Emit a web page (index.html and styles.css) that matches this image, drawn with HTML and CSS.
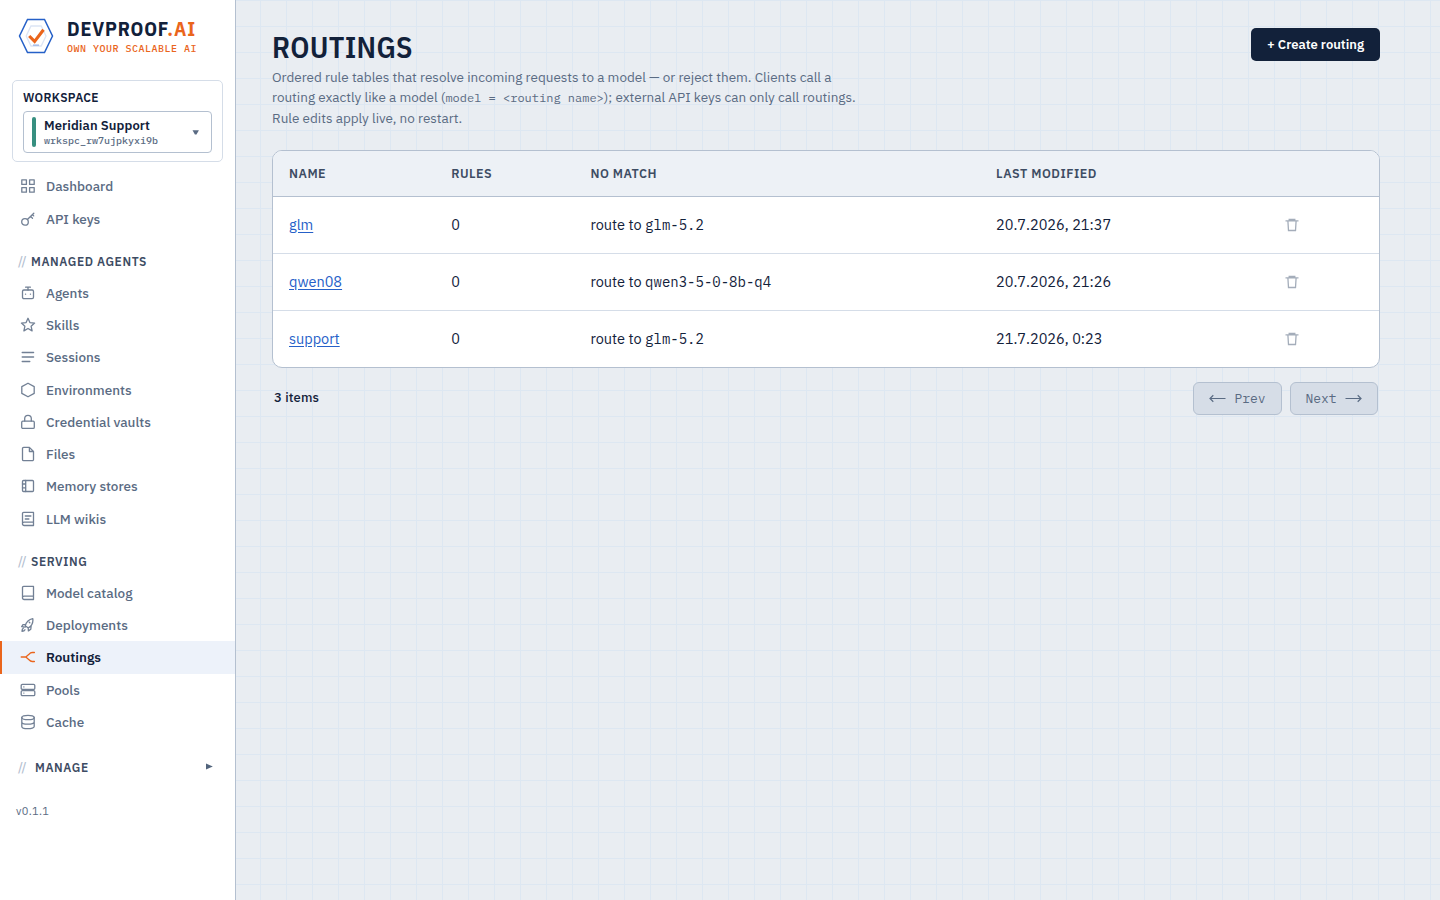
FILE: index.html
```html
<!DOCTYPE html>
<html lang="en">
<head>
<meta charset="utf-8">
<title>Routings</title>
<link rel="stylesheet" href="styles.css">
</head>
<body>
<div class="app">
  <aside class="sidebar">
    <div class="brand">
      <svg class="brand-mark" width="36" height="36" viewBox="0 0 36 36" fill="none">
        <path d="M9.500 1.500H26.500L34.500 18L26.500 34.500H9.500L1.500 18Z" stroke="#2560c8" stroke-width="1.5"/>
        <path d="M13 8H23.200L28 18L23.200 28H13L8.200 18Z" stroke="#dce5f5" stroke-width="1.3"/>
        <path d="M15 27.200H21" stroke="#a9c0ea" stroke-width="1.6"/>
        <path d="M11.200 18L16.600 23.400L25.500 11.800" stroke="#ea651c" stroke-width="3.100"/>
      </svg>
      <div class="brand-text">
        <div class="brand-name">DEVPROOF<span class="brand-accent">.AI</span></div>
        <div class="brand-tag">OWN YOUR SCALABLE AI</div>
      </div>
    </div>
    <div class="workspace">
      <div class="workspace-label">WORKSPACE</div>
      <div class="workspace-select">
        <span class="workspace-bar"></span>
        <div class="workspace-info">
          <div class="workspace-name">Meridian Support</div>
          <div class="workspace-id">wrkspc_rw7ujpkyxi9b</div>
        </div>
        <svg class="caret" width="7" height="5" viewBox="0 0 7 5"><path d="M.5 .3H6.900L4.500 4.600H2.900Z" fill="#5a6b83"/></svg>
      </div>
    </div>
    <nav class="nav">
      <a class="item"><svg class="icon" viewBox="0 0 16 16"><path d="M1.800 1.800h4.600v4.600H1.800zM9.600 1.800h4.600v4.600H9.600zM1.800 9.600h4.600v4.600H1.800zM9.600 9.600h4.600v4.600H9.600z"/></svg><span>Dashboard</span></a>
      <a class="item"><svg class="icon" viewBox="0 0 16 16"><circle cx="5" cy="10.900" r="3.300"/><path d="M7.400 8.500L13.800 2.200M10.600 5.400l1.900 1.900M12.400 3.600l1.300 1.300"/></svg><span>API keys</span></a>
      <div class="group"><i class="slashes">//</i><span class="group-name">MANAGED AGENTS</span></div>
      <a class="item"><svg class="icon" viewBox="0 0 16 16"><rect x="2.500" y="5" width="11" height="8.600" rx="1.400"/><path d="M8 5V2.200M5.600 2.200h4.800M5.500 9.200h.1M10.400 9.200h.1"/></svg><span>Agents</span></a>
      <a class="item"><svg class="icon" viewBox="0 0 16 16"><path d="M8 1.300l1.900 4.300 4.700.5-3.500 3.100 1 4.700L8 11.500l-4.100 2.400 1-4.700L1.400 6.100l4.700-.5z"/></svg><span>Skills</span></a>
      <a class="item"><svg class="icon" viewBox="0 0 16 16"><path d="M2.200 3.500h11.400M2.200 8h11.400M2.200 12.500h7.600"/></svg><span>Sessions</span></a>
      <a class="item"><svg class="icon" viewBox="0 0 16 16"><path d="M8 1.200l6.200 3.400v6.800L8 14.800l-6.200-3.400V4.600z"/></svg><span>Environments</span></a>
      <a class="item"><svg class="icon" viewBox="0 0 16 16"><rect x="1.700" y="7.200" width="12.600" height="7.200" rx="1.200"/><path d="M4.700 7V4.600a3.300 3.300 0 0 1 6.600 0V7"/></svg><span>Credential vaults</span></a>
      <a class="item"><svg class="icon" viewBox="0 0 16 16"><path d="M9.400 1.400H3.700a1.200 1.200 0 0 0-1.200 1.200v10.800a1.200 1.200 0 0 0 1.200 1.200h8.600a1.200 1.200 0 0 0 1.200-1.200V5.500zM9.400 1.400v4.100h4.100"/></svg><span>Files</span></a>
      <a class="item"><svg class="icon" viewBox="0 0 16 16"><rect x="2.500" y="2.500" width="11" height="11" rx="1"/><path d="M5.700 2.500v11M2.500 6h3.200M2.500 9.800h3.200"/></svg><span>Memory stores</span></a>
      <a class="item"><svg class="icon" viewBox="0 0 16 16"><path d="M2.500 12.900V2.600a1.200 1.200 0 0 1 1.200-1.200h9.800v13.100H4.100a1.600 1.600 0 0 1 0-3.300h9.400M5.300 5h5.600M5.300 8h3.600"/></svg><span>LLM wikis</span></a>
      <div class="group"><i class="slashes">//</i><span class="group-name">SERVING</span></div>
      <a class="item"><svg class="icon" viewBox="0 0 16 16"><path d="M2.500 12.900V2.600a1.200 1.200 0 0 1 1.200-1.200h9.800v13.100H4.100a1.600 1.600 0 0 1 0-3.300h9.400"/></svg><span>Model catalog</span></a>
      <a class="item"><svg class="icon" viewBox="0 0 16 16"><path d="M5.300 8.700c.8-3 3.300-6.300 7.500-7.100.5 3.800-1.200 7.400-4.500 9.300zM5.700 7.300L3 7.600 1.700 9.700l3.500.5M8.200 10.700l.2 3.200 2.400-1.700.4-3.700M3.300 11.300c-1.200.7-1.300 2-1.300 3 1 0 2.400-.2 3-1.500M9.300 5.300l.5.5"/></svg><span>Deployments</span></a>
      <a class="item active"><svg class="icon" viewBox="0 0 16 16"><path d="M1.200 8h4.600M14.400 3.500h-2.200c-1.500 0-2.300.7-3.200 1.700L5.800 8l3.200 2.800c.9 1 1.700 1.700 3.200 1.700h2.200"/></svg><span>Routings</span></a>
      <a class="item"><svg class="icon" viewBox="0 0 16 16"><rect x="1.200" y="2.400" width="13.600" height="5" rx="1.200"/><rect x="1.200" y="8.600" width="13.600" height="5" rx="1.200"/><path d="M3.800 4.900h.1M3.800 11.100h.1"/></svg><span>Pools</span></a>
      <a class="item"><svg class="icon" viewBox="0 0 16 16"><ellipse cx="8" cy="3.500" rx="6.200" ry="2.200"/><path d="M1.800 3.500v9c0 1.200 2.800 2.200 6.200 2.200s6.200-1 6.200-2.200v-9M1.800 8c0 1.200 2.800 2.200 6.200 2.200s6.200-1 6.200-2.200"/></svg><span>Cache</span></a>
      <div class="group group-toggle"><i class="slashes">//</i><span class="group-name">MANAGE</span>
        <svg class="tri" width="7" height="7" viewBox="0 0 7 7"><path d="M0 .4V6.600L6.800 3.500Z" fill="#52647c"/></svg>
      </div>
    </nav>
    <div class="version">v0.1.1</div>
  </aside>

  <main class="main">
    <header class="page-head">
      <div>
        <h1 class="title">ROUTINGS</h1>
        <p class="desc">Ordered rule tables that resolve incoming requests to a model — or reject them. Clients call a<br>routing exactly like a model (<code class="code">model = &lt;routing name&gt;</code>); external API keys can only call routings.<br>Rule edits apply live, no restart.</p>
      </div>
      <button class="create">+ Create routing</button>
    </header>

    <section class="table">
      <div class="row head"><span>NAME</span><span>RULES</span><span>NO MATCH</span><span>LAST MODIFIED</span><span></span></div>
      <div class="row"><span><a class="link">glm</a></span><span>0</span><span>route to <code class="model">glm-5.2</code></span><span>20.7.2026, 21:37</span><span class="cell-icon"><svg class="trash" viewBox="0 0 14 14"><path d="M.5 2.900h13M4.200 2.700V1.500h5.600v1.200M2.900 3l.6 9.500h7l.6-9.500"/></svg></span></div>
      <div class="row"><span><a class="link">qwen08</a></span><span>0</span><span>route to <code class="model">qwen3-5-0-8b-q4</code></span><span>20.7.2026, 21:26</span><span class="cell-icon"><svg class="trash" viewBox="0 0 14 14"><path d="M.5 2.900h13M4.200 2.700V1.500h5.600v1.200M2.900 3l.6 9.500h7l.6-9.500"/></svg></span></div>
      <div class="row"><span><a class="link">support</a></span><span>0</span><span>route to <code class="model">glm-5.2</code></span><span>21.7.2026, 0:23</span><span class="cell-icon"><svg class="trash" viewBox="0 0 14 14"><path d="M.5 2.900h13M4.200 2.700V1.500h5.600v1.200M2.900 3l.6 9.500h7l.6-9.500"/></svg></span></div>
    </section>

    <footer class="pager">
      <span class="count">3 items</span>
      <div class="pager-buttons">
        <button class="page-btn"><svg class="arrow" viewBox="0 0 17 9"><path d="M16.500 4.500H1M4.300 1.300L1 4.500l3.300 3.200"/></svg>Prev</button>
        <button class="page-btn">Next<svg class="arrow" viewBox="0 0 17 9"><path d="M.5 4.500H16M12.700 1.300L16 4.500l-3.300 3.200"/></svg></button>
      </div>
    </footer>
  </main>
</div>
</body>
</html>
```
FILE: styles.css
```css
* { box-sizing: border-box; }
body {
  margin: 0;
  font-family: "IBM Plex Sans", Roboto, sans-serif;
  font-size: 14.5px;
  color: #12213a;
  background-color: #e9edf2;
  background-image:
    linear-gradient(#dde7f2 1px, transparent 1px),
    linear-gradient(90deg, #dde7f2 1px, transparent 1px);
  background-size: 26px 26px;
}
code, .brand-tag, .workspace-id, .page-btn { font-family: "IBM Plex Mono", "Liberation Mono", monospace; }
button { font: inherit; }
.app { display: flex; height: 900px; overflow: hidden; }

/* Sidebar */
.sidebar { width: 236px; flex: none; background: #fff; border-right: 1px solid #b4c0d0; }
.brand { display: flex; gap: 13px; padding: 18px 18px 0; height: 80px; }
.brand-text { white-space: nowrap; }
.brand-name { font-family: "IBM Plex Sans Condensed", "IBM Plex Sans", Roboto, sans-serif; font-size: 20px; font-weight: 700; line-height: 22px; letter-spacing: .8px; }
.brand-accent { color: #ea651c; }
.brand-tag { font-size: 10px; font-weight: 500; line-height: 12px; margin-top: 3px; letter-spacing: .5px; color: #ea651c; }
.workspace { margin: 0 12px; height: 82px; padding: 9px 10px; border: 1px solid #d5dde8; border-radius: 5px; background: #fff; }
.workspace-label { font-size: 12px; font-weight: 600; line-height: 16px; letter-spacing: .36px; }
.workspace-select { display: flex; align-items: center; height: 42px; margin-top: 5px; padding: 0 12px 0 8px; border: 1px solid #b4c0d0; border-radius: 4px; }
.workspace-bar { width: 4px; height: 30px; border-radius: 2px; background: #378f80; }
.workspace-info { flex: 1; padding-left: 8px; }
.workspace-name { font-size: 13px; font-weight: 600; line-height: 16px; letter-spacing: .1px; }
.workspace-id { font-size: 10px; line-height: 13px; font-weight: 500; color: #5a6b83; }
.nav { padding-top: 8.300px; }
.item { display: flex; align-items: center; gap: 10px; height: 32.250px; padding-left: 18px; border-left: 2px solid transparent; font-size: 13.5px; font-weight: 500; color: #5a6b83; }
.item.active { background: #edf2fa; border-left-color: #ea651c; color: #12213a; font-weight: 600; }
.item .icon { opacity: .85; }
.item.active .icon { color: #ea651c; opacity: 1; }
.icon { width: 16px; height: 16px; fill: none; stroke: currentColor; stroke-width: 1.3; stroke-linejoin: round; stroke-linecap: round; }
.group { display: flex; align-items: center; height: 42px; padding: 12px 22px 0 18px; font-size: 12px; font-weight: 600; color: #3d4c63; }
.group-name { letter-spacing: .62px; }
.slashes { width: 13px; font-weight: 500; font-style: normal; letter-spacing: .4px; color: #b4c0d0; }
.group-toggle { height: 46.500px; }
.group-toggle .slashes { width: 17px; }
.tri { margin: -1px 0 0 auto; }
.version { padding: 18px 16px 0; font-size: 11px; line-height: 16px; letter-spacing: .35px; color: #5a6b83; }

/* Page */
.main { flex: 1; padding: 28px 60px 0 36px; }
.page-head { display: flex; justify-content: space-between; align-items: flex-start; height: 122px; }
.title { margin: 0; font-family: "IBM Plex Sans Condensed", "IBM Plex Sans", Roboto, sans-serif; font-size: 30px; line-height: 38.500px; font-weight: 600; letter-spacing: .3px; }
.desc { margin: 0; font-size: 13.5px; line-height: 20.250px; color: #5a6b83; white-space: nowrap; }
.code { font-size: 12px; }
.create { height: 33px; width: 129px; padding: 0; border: 0; border-radius: 5px; background: #12213a; color: #fff; font-size: 13px; font-weight: 600; white-space: nowrap; }
.table { border: 1px solid #b4c0d0; border-radius: 10px; background: #fff; overflow: hidden; }
.row { display: grid; grid-template-columns: 162.300px 139.200px 405.500px 289px 1fr; align-items: center; height: 57px; border-bottom: 1px solid #d5dde8; }
.row > span { padding-left: 16px; white-space: nowrap; line-height: 22px; margin-top: -1px; }
.row:last-child { border-bottom: 0; height: 56px; }
.row.head { height: 46px; background: #edf1f6; border-color: #b4c0d0; font-size: 12.5px; font-weight: 600; letter-spacing: .5px; color: #3d4c63; }
.link { color: #2560c8; text-decoration: underline; text-underline-offset: 2px; }
.model { font-size: 14px; }
.row > .cell-icon { display: flex; margin-top: 0; }
.trash { width: 14px; height: 14px; fill: none; stroke: #a4adba; stroke-width: 1.300; }
.pager { display: flex; justify-content: space-between; padding: 14px 2px 0; }
.count { font-size: 13px; line-height: 31px; font-weight: 500; letter-spacing: .15px; }
.pager-buttons { display: flex; gap: 8px; }
.page-btn { display: flex; align-items: center; justify-content: center; gap: 8px; width: 89px; height: 33px; padding: 0; border: 1px solid #b4c0d0; border-radius: 6px; background: #d6dde7; color: #5a6b83; font-size: 13px; }
.page-btn + .page-btn { width: 88px; padding-right: 1px; }
.arrow { width: 17px; height: 9px; fill: none; stroke: currentColor; stroke-width: 1.200; }
```
